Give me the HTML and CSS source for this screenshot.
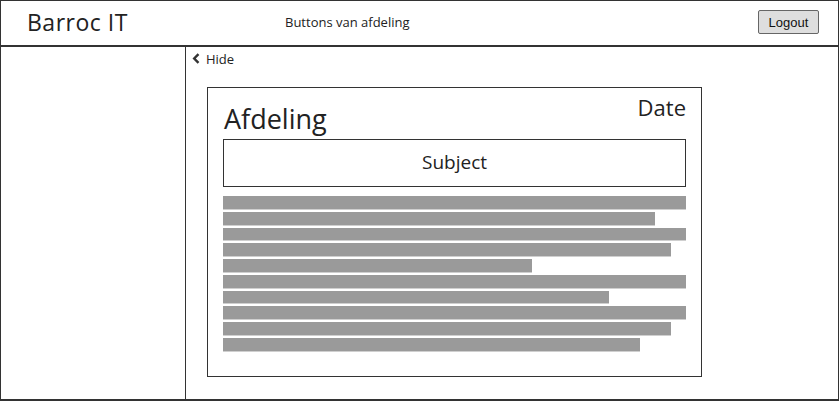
FILE: index.html
```html
<!DOCTYPE html>
<html>
<head>
<meta charset="utf-8">
<link rel="stylesheet" href="styles.css">
</head>
<body>
<div class="app">
  <header class="topbar">
    <div class="brand">Barroc IT</div>
    <div class="nav-title">Buttons van afdeling</div>
    <button class="logout">Logout</button>
  </header>
  <div class="main">
    <aside class="sidebar"></aside>
    <section class="content">
      <div class="hide">
        <svg class="chev" width="8" height="11" viewBox="0 0 8 11"><path d="M6.5 1.2 L2.2 5.5 L6.5 9.8" fill="none" stroke="#333" stroke-width="2.4"/></svg>
        <span>Hide</span>
      </div>
      <div class="card">
        <div class="card-head">
          <div class="dept">Afdeling</div>
          <div class="date">Date</div>
        </div>
        <div class="subject">Subject</div>
        <div class="lines">
          <div class="line" style="width:463px"></div>
          <div class="line" style="width:432px"></div>
          <div class="line" style="width:463px"></div>
          <div class="line" style="width:448px"></div>
          <div class="line" style="width:309px"></div>
          <div class="line" style="width:463px"></div>
          <div class="line" style="width:386px"></div>
          <div class="line" style="width:463px"></div>
          <div class="line" style="width:448px"></div>
          <div class="line" style="width:417px"></div>
        </div>
      </div>
    </section>
  </div>
</div>
</body>
</html>
```
FILE: styles.css
```css
* { box-sizing: border-box; }
html, body { margin: 0; padding: 0; background: #fff; }
body { font-family: "Open Sans", "DejaVu Sans", sans-serif; color: #222; }

.app {
  width: 839px;
  height: 401px;
  border: 1px solid #333;
  border-bottom-width: 2px;
  display: flex;
  flex-direction: column;
}

.topbar {
  height: 46px;
  border-bottom: 2px solid #333;
  display: flex;
  align-items: center;
  padding: 0 19px 0 26px;
  flex: none;
}
.brand {
  font-size: 23px;
  letter-spacing: 0.5px;
  width: 258px;
  margin-top: -3px;
}
.nav-title {
  font-size: 13px;
  flex: 1;
  margin-top: -2px;
}
.logout {
  font-family: "Liberation Sans", Arial, sans-serif;
  font-size: 13px;
  color: #111;
  background: #dedede;
  border: 1px solid #666;
  border-radius: 2px;
  width: 61px;
  height: 24px;
  padding: 0;
  margin-top: -2px;
}

.main {
  flex: 1;
  display: flex;
  min-height: 0;
}
.sidebar {
  width: 185px;
  border-right: 1px solid #333;
  flex: none;
}
.content {
  flex: 1;
  padding: 3px 0 0 6px;
}
.hide {
  display: flex;
  align-items: center;
  gap: 6px;
  font-size: 13px;
  height: 17px;
}

.card {
  margin: 20px 0 0 15px;
  width: 495px;
  height: 290px;
  border: 1px solid #333;
  padding: 6px 15px 0 15px;
}
.card-head {
  display: flex;
  justify-content: space-between;
  height: 45px;
}
.dept {
  font-size: 27px;
  align-self: flex-end;
  line-height: 30px;
  margin-bottom: 5px;
  margin-left: 1px;
}
.date {
  font-size: 22px;
  line-height: 26px;
}
.subject {
  height: 48px;
  border: 1px solid #333;
  display: flex;
  align-items: center;
  justify-content: center;
  font-size: 19px;
  padding-bottom: 2px;
}
.lines {
  margin-top: 9px;
  display: flex;
  flex-direction: column;
  gap: 2px;
}
.line {
  height: 13.75px;
  background: #9a9a9a;
  border-bottom: 1px solid #cfcfcf;
}
```
